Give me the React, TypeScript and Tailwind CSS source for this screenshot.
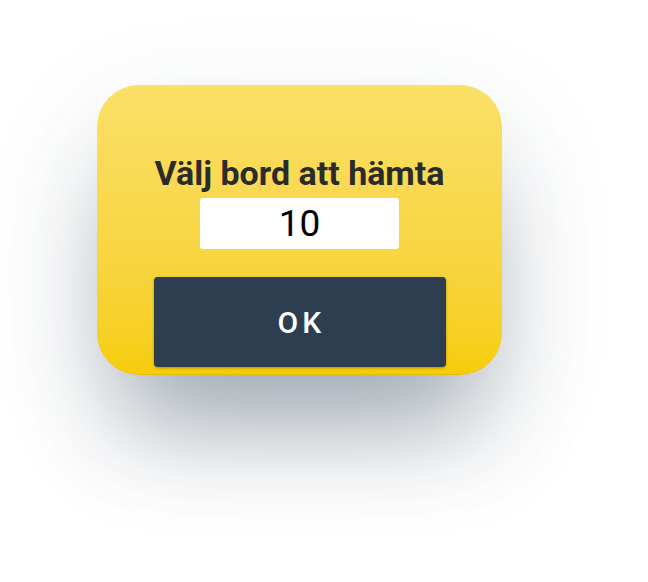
export default function App() {
  return (
    <div className="w-[648px] h-[582px] bg-white pl-[97px] pt-[85px]" style={{ fontFamily: "Roboto, 'Liberation Sans', sans-serif" }}>
      <div className="w-[405px] h-[290px] rounded-[42px] bg-gradient-to-b from-[#fbe068] to-[#f6cd05] shadow-[0_75px_100px_-25px_rgba(44,62,85,0.38),0_40px_120px_rgba(44,62,85,0.12)] border-b border-[#e2bc08] flex flex-col items-center pt-[68px]">
        <div className="text-[34px] leading-[40px] font-bold text-[#2b2b2b]">Välj bord att hämta</div>
        <div className="mt-[5px] w-[199px] h-[51px] bg-white rounded-[3px] flex items-center justify-center text-[37px] text-black leading-none">10</div>
        <button className="mt-[28px] w-[292px] h-[90px] bg-[#2d3e50] rounded-[4px] shadow-[0_1px_3px_rgba(0,0,0,0.3)] text-white text-[30px] font-medium tracking-[0.14em] flex items-center justify-center pl-[4px]">OK</button>
      </div>
    </div>
  );
}
